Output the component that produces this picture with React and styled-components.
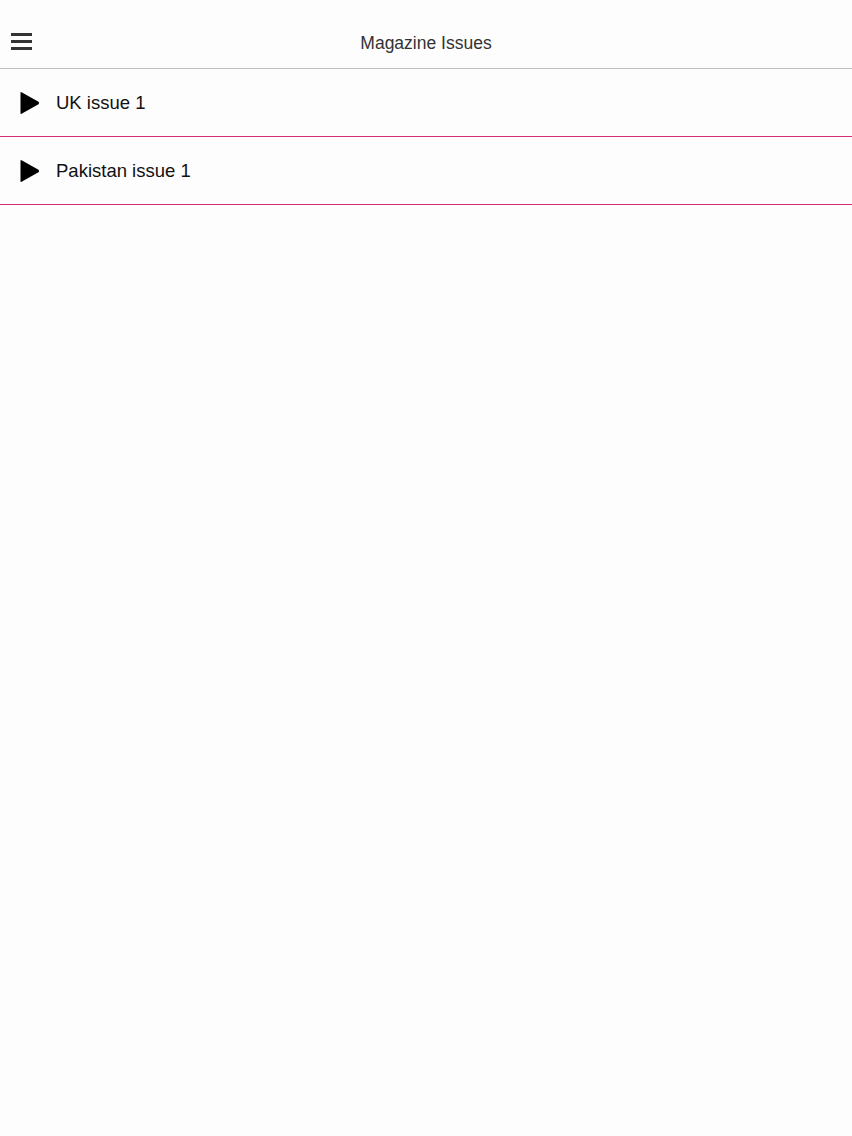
import React from "react";
import styled, { createGlobalStyle } from "styled-components";

const GlobalStyle = createGlobalStyle`
  html, body {
    margin: 0;
    padding: 0;
    background: #fdfdfd;
    font-family: "Liberation Sans", Arial, sans-serif;
  }
`;

const Page = styled.div`
  width: 852px;
  min-height: 1136px;
  background: #fdfdfd;
`;

const Header = styled.header`
  position: relative;
  display: flex;
  align-items: center;
  justify-content: center;
  height: 68px;
  border-bottom: 1px solid #bdbdbd;
`;

const MenuButton = styled.button`
  position: absolute;
  left: 11px;
  top: 33px;
  width: 21px;
  height: 17px;
  padding: 0;
  border: 0;
  background: transparent;
  display: flex;
  flex-direction: column;
  justify-content: space-between;
`;

const Bar = styled.span`
  display: block;
  height: 3px;
  background: #333;
`;

const Title = styled.h1`
  margin: 0;
  padding-top: 18px;
  font-size: 17.5px;
  font-weight: 400;
  color: #333;
`;

const List = styled.ul`
  list-style: none;
  margin: 0;
  padding: 0;
`;

const Row = styled.li`
  display: flex;
  align-items: center;
  height: 67px;
  padding-left: 20px;
  border-bottom: 1px solid #d22f78;
`;

const Arrow = styled.svg`
  width: 20px;
  height: 26px;
  margin-right: 16px;
  flex-shrink: 0;
`;

const Label = styled.span`
  font-size: 18.5px;
  color: #111;
`;

const issues = ["UK issue 1", "Pakistan issue 1"];

const App = () => {
  return (
    <Page>
      <GlobalStyle />
      <Header>
        <MenuButton aria-label="Menu">
          <Bar />
          <Bar />
          <Bar />
        </MenuButton>
        <Title>Magazine Issues</Title>
      </Header>
      <List>
        {issues.map((name) => (
          <Row key={name}>
            <Arrow viewBox="0 0 20 26">
              <path
                d="M2 2.5 Q0.5 1.2 0.5 3 L0.5 23 Q0.5 24.8 2 23.5 L18.5 14.2 Q19.8 13 18.5 11.8 Z"
                fill="#000"
              />
            </Arrow>
            <Label>{name}</Label>
          </Row>
        ))}
      </List>
    </Page>
  );
};

export default App;
